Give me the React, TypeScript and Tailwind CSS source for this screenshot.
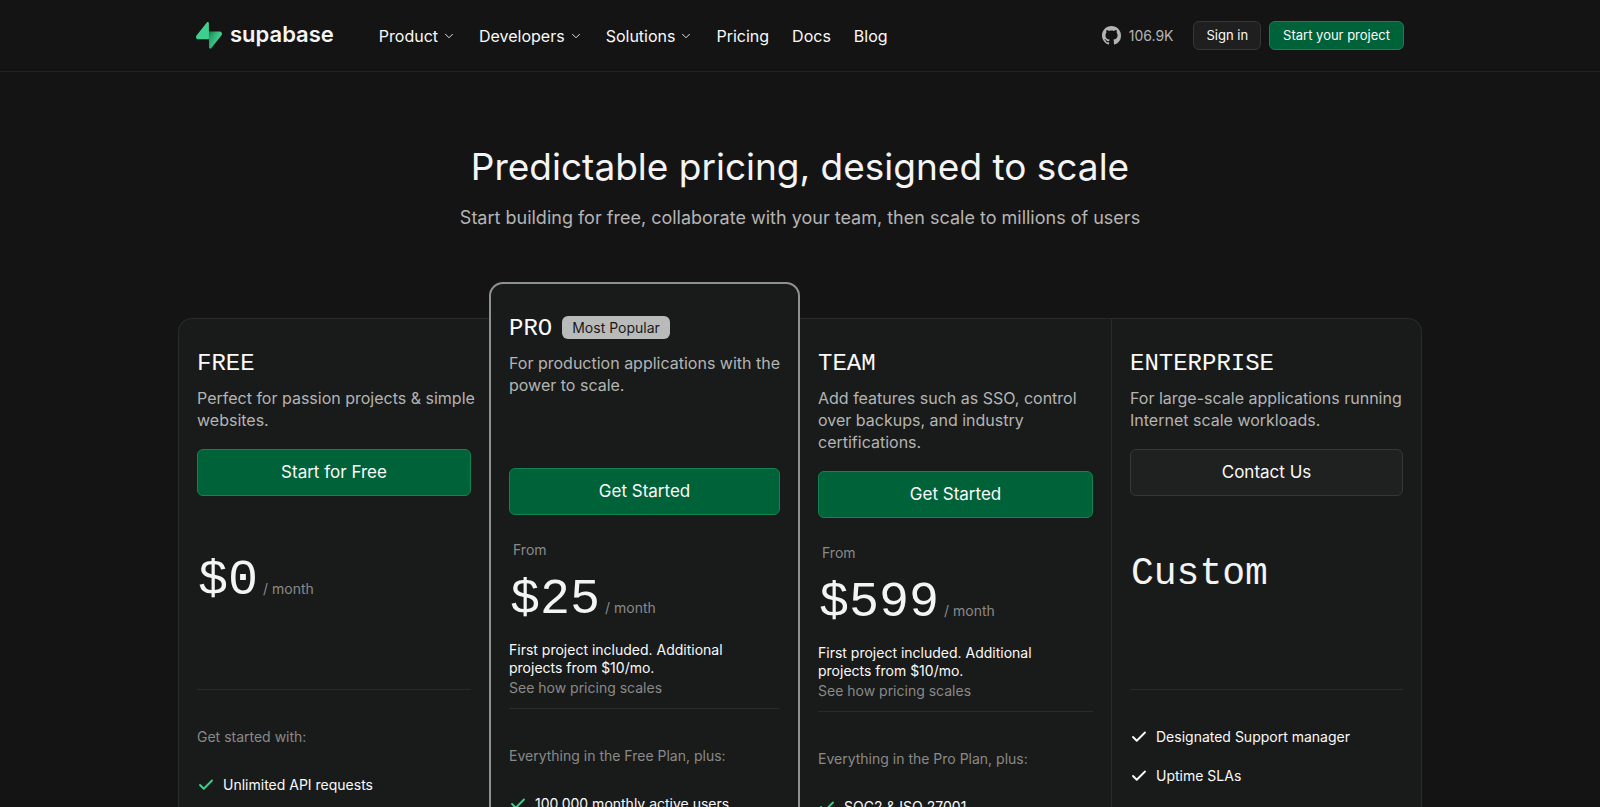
import { Check, ChevronDown } from "lucide-react";
import clsx from "clsx";

type Plan = {
  name: string;
  badge?: string;
  description: string;
  cta: string;
  from?: boolean;
  price: string;
  monthly: boolean;
  note?: string;
  noteLink?: string;
  preface?: string;
  features: string[];
};

const navItems = [
  { label: "Product", menu: true },
  { label: "Developers", menu: true },
  { label: "Solutions", menu: true },
  { label: "Pricing" },
  { label: "Docs" },
  { label: "Blog" },
];

const plans: Plan[] = [
  {
    name: "FREE",
    description: "Perfect for passion projects & simple websites.",
    cta: "Start for Free",
    price: "$0",
    monthly: true,
    preface: "Get started with:",
    features: ["Unlimited API requests"],
  },
  {
    name: "PRO",
    badge: "Most Popular",
    description: "For production applications with the power to scale.",
    cta: "Get Started",
    from: true,
    price: "$25",
    monthly: true,
    note: "First project included. Additional projects from $10/mo.",
    noteLink: "See how pricing scales",
    preface: "Everything in the Free Plan, plus:",
    features: ["100,000 monthly active users"],
  },
  {
    name: "TEAM",
    description: "Add features such as SSO, control over backups, and industry certifications.",
    cta: "Get Started",
    from: true,
    price: "$599",
    monthly: true,
    note: "First project included. Additional projects from $10/mo.",
    noteLink: "See how pricing scales",
    preface: "Everything in the Pro Plan, plus:",
    features: ["SOC2 & ISO 27001"],
  },
  {
    name: "ENTERPRISE",
    description: "For large-scale applications running Internet scale workloads.",
    cta: "Contact Us",
    price: "Custom",
    monthly: false,
    features: ["Designated Support manager", "Uptime SLAs"],
  },
];

function Logo() {
  return (
    <a href="#" className="flex items-center gap-2 text-[#f4f4f4]">
      <svg viewBox="0 0 109 113" className="h-[27px] w-[26px]" fill="none" aria-hidden="true">
        <defs>
          <linearGradient id="bolt" x1="53.97" y1="54.97" x2="94.16" y2="71.83" gradientUnits="userSpaceOnUse">
            <stop stopColor="#249361" />
            <stop offset="1" stopColor="#3ECF8E" />
          </linearGradient>
          <linearGradient id="shade" x1="36.16" y1="30.58" x2="54.48" y2="65.08" gradientUnits="userSpaceOnUse">
            <stop />
            <stop offset="1" stopOpacity="0" />
          </linearGradient>
        </defs>
        <path
          d="M63.7076 110.284C60.8481 113.885 55.0502 111.912 54.9813 107.314L53.9738 40.0627L99.1935 40.0627C107.384 40.0627 111.952 49.5228 106.859 55.9374L63.7076 110.284Z"
          fill="url(#bolt)"
        />
        <path
          d="M63.7076 110.284C60.8481 113.885 55.0502 111.912 54.9813 107.314L53.9738 40.0627L99.1935 40.0627C107.384 40.0627 111.952 49.5228 106.859 55.9374L63.7076 110.284Z"
          fill="url(#shade)"
          fillOpacity="0.2"
        />
        <path
          d="M45.317 2.07103C48.1765 -1.53037 53.9745 0.442937 54.0434 5.041L54.4849 72.2922H9.83113C1.64038 72.2922 -2.92775 62.8321 2.1655 56.4175L45.317 2.07103Z"
          fill="#3ECF8E"
        />
      </svg>
      <span className="pb-1 text-[22px] leading-7 font-semibold">supabase</span>
    </a>
  );
}

function GithubMark() {
  return (
    <svg viewBox="0 0 16 16" className="size-[19px]" fill="currentColor" aria-hidden="true">
      <path d="M8 0C3.58 0 0 3.58 0 8c0 3.54 2.29 6.53 5.47 7.59.4.07.55-.17.55-.38 0-.19-.01-.82-.01-1.49-2.01.37-2.53-.49-2.69-.94-.09-.23-.48-.94-.82-1.13-.28-.15-.68-.52-.01-.53.63-.01 1.08.58 1.23.82.72 1.21 1.87.87 2.33.66.07-.52.28-.87.51-1.07-1.78-.2-3.64-.89-3.64-3.95 0-.87.31-1.59.82-2.15-.08-.2-.36-1.02.08-2.12 0 0 .67-.21 2.2.82.64-.18 1.32-.27 2-.27s1.36.09 2 .27c1.53-1.04 2.2-.82 2.2-.82.44 1.1.16 1.92.08 2.12.51.56.82 1.27.82 2.15 0 3.07-1.87 3.75-3.65 3.95.29.25.54.73.54 1.48 0 1.07-.01 1.93-.01 2.2 0 .21.15.46.55.38A8.01 8.01 0 0 0 16 8c0-4.42-3.58-8-8-8Z" />
    </svg>
  );
}

function Header() {
  return (
    <header className="border-b border-[#232323]">
      <div className="mx-auto flex h-[71px] max-w-[1244px] items-center px-[18px]">
        <Logo />
        <nav className="ml-[45px] flex items-center gap-[23px] text-[16px] text-[#fafafa]">
          {navItems.map((item) =>
            item.menu ? (
              <button key={item.label} className="flex items-center gap-1">
                {item.label}
                <ChevronDown className="size-[14px]" strokeWidth={1.5} />
              </button>
            ) : (
              <a key={item.label} href="#">
                {item.label}
              </a>
            )
          )}
        </nav>
        <div className="ml-auto flex items-center gap-2 text-[13px]">
          <a href="#" className="mr-3 flex items-center gap-2 text-[14px] text-[#b4b4b4]">
            <GithubMark />
            106.9K
          </a>
          <button className="h-[29px] rounded-md border border-[#363636] bg-[#1f1f1f] px-3 text-[#fafafa]">
            Sign in
          </button>
          <button className="h-[29px] rounded-md border border-[#128353] bg-[#006239] px-[13px] text-[#fafafa]">
            Start your project
          </button>
        </div>
      </div>
    </header>
  );
}

function PlanCard({ plan, index }: { plan: Plan; index: number }) {
  const popular = !!plan.badge;
  const enterprise = plan.name === "ENTERPRISE";
  return (
    <section
      className={clsx(
        "flex flex-col bg-[#191b1a] px-[18px] pt-[27px] pb-20",
        popular ? "-mt-9 rounded-t-[14px] border-2 border-[#8f918f]" : "border-t border-[#292b2a]",
        index === 0 && "rounded-tl-[14px] border-l",
        index === 3 && "rounded-tr-[14px] border-x"
      )}
    >
      <div className="flex h-8 items-center gap-[10px]">
        <h2 className="pt-1 font-['Liberation_Mono',monospace] text-[24px] leading-8 text-[#fafafa]">{plan.name}</h2>
        {plan.badge && (
          <span className="rounded-md bg-[#b9bbba] px-[10px] text-[14px] leading-[23px] text-[#1a1a1a]">
            {plan.badge}
          </span>
        )}
      </div>
      {/* slightly wider than the column so the longest lines stay on one row */}
      <p
        className={clsx(
          "-mr-2 mt-[9px] text-[16px] leading-[22px] text-[#b4b4b4]",
          popular && "min-h-[98px]"
        )}
      >
        {plan.description}
      </p>
      <button
        className={clsx(
          "mt-[18px] h-[47px] w-full rounded-md border text-[17px] text-[#fafafa]",
          enterprise ? "border-[#363837] bg-[#1f2120]" : "border-[#128353] bg-[#006239]"
        )}
      >
        {plan.cta}
      </button>

      <div className="h-[194px] border-b border-[#292b2a] pt-6">
        <div className="h-[22px] px-1 text-[14px] leading-[22px] text-[#898989]">{plan.from && "From"}</div>
        <div className="flex h-20 items-baseline gap-[5px] px-px pt-1">
          <span
            className={clsx(
              "font-['Liberation_Mono',monospace] text-[#f4f4f4]",
              plan.monthly ? "text-[50px] leading-[70px]" : "text-[38px] leading-[56px]"
            )}
          >
            {plan.price}
          </span>
          {plan.monthly && <span className="text-[14px] text-[#898989]">/ month</span>}
        </div>
        {plan.note && (
          <div className="pr-6 text-[14px]">
            <p className="leading-[18px] text-[#fafafa]">{plan.note}</p>
            <a href="#" className="block leading-[22px] text-[#898989]">
              {plan.noteLink}
            </a>
          </div>
        )}
      </div>

      <div className="pt-9 text-[14px] leading-[22px]">
        {plan.preface && <p className="mb-[26px] text-[#898989]">{plan.preface}</p>}
        <ul className="flex flex-col gap-[17px] text-[#fafafa]">
          {plan.features.map((feature) => (
            <li key={feature} className="flex items-center gap-2">
              <Check className={clsx("size-[18px]", !enterprise && "text-[#3ecf8e]")} strokeWidth={2.5} />
              {feature}
            </li>
          ))}
        </ul>
      </div>
    </section>
  );
}

export default function App() {
  return (
    <div className="min-h-screen bg-[#141414] font-['Inter',sans-serif]">
      <Header />
      <main>
        <div className="px-6 pt-[70px] text-center">
          <h1 className="text-[37px] leading-[50px] text-[#f4f4f4]">Predictable pricing, designed to scale</h1>
          <p className="mt-[14px] text-[18px] leading-6 text-[#b4b4b4]">
            Start building for free, collaborate with your team, then scale to millions of users
          </p>
        </div>
        <div className="mx-auto mt-[88px] grid max-w-[1244px] grid-cols-4">
          {plans.map((plan, i) => (
            <PlanCard key={plan.name} plan={plan} index={i} />
          ))}
        </div>
      </main>
    </div>
  );
}
